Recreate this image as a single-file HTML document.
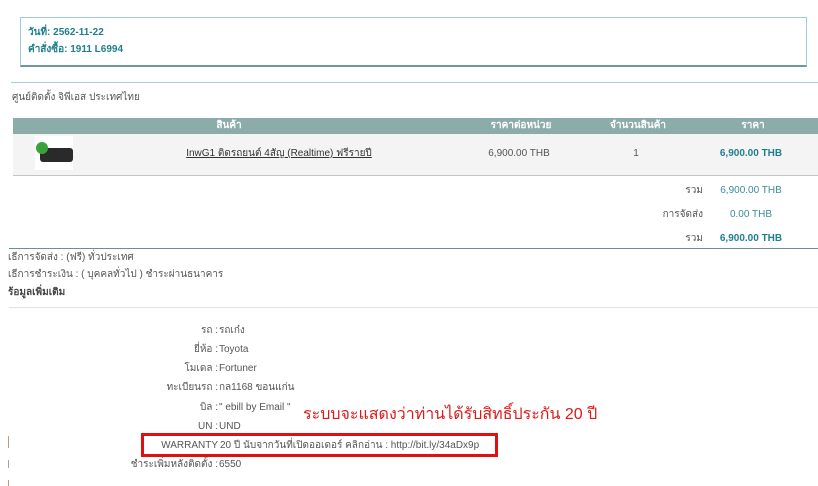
<!DOCTYPE html>
<html><head><meta charset="utf-8"><style>
*{margin:0;padding:0;box-sizing:border-box}
body{width:818px;height:486px;background:#fff;position:relative;overflow:hidden;font-family:"Liberation Sans","DejaVu Sans",sans-serif;font-size:10px;color:#555}
.a{position:absolute;white-space:nowrap;line-height:12px}
.t{color:#1f7f8f;font-weight:bold}
.c{transform:translateX(-50%)}
.r{text-align:right}
</style></head><body>
<div class="a" style="left:20px;top:17px;width:787px;height:50px;border:1px solid #9dcdd4;border-bottom:2px solid #6a9aa0"></div>
<div class="a t" style="left:28px;top:27px">วันที่: 2562-11-22</div>
<div class="a t" style="left:28px;top:44px">คำสั่งซื้อ: 1911 L6994</div>
<div class="a" style="left:11px;top:82px;width:807px;height:1px;background:#a3d3d8"></div>
<div class="a" style="left:12px;top:92px">ศูนย์ติดตั้ง จิพีเอส ประเทศไทย</div>
<div class="a" style="left:13px;top:118px;width:805px;height:16px;background:#8cacaa"></div>
<div class="a c" style="left:229px;top:120px;color:#fff;font-weight:bold">สินค้า</div>
<div class="a c" style="left:521px;top:120px;color:#fff;font-weight:bold">ราคาต่อหน่วย</div>
<div class="a c" style="left:638px;top:120px;color:#fff;font-weight:bold">จำนวนสินค้า</div>
<div class="a c" style="left:753px;top:120px;color:#fff;font-weight:bold">ราคา</div>
<div class="a" style="left:13px;top:134px;width:805px;height:42px;background:#f4f4f4;border-bottom:1px solid #c4c4c4"></div>
<div class="a" style="left:35px;top:136px;width:38px;height:34px;background:#fff"></div>
<div class="a" style="left:40px;top:148px;width:33px;height:14px;background:#2a2a2a;border-radius:3px"></div>
<div class="a" style="left:36px;top:142px;width:12px;height:12px;background:#3aa23a;border-radius:50%"></div>
<div class="a c" style="left:279px;top:148px;color:#333;text-decoration:underline">InwG1 ติดรถยนต์ 4สัญ (Realtime) ฟรีรายปี</div>
<div class="a c" style="left:519px;top:148px">6,900.00 THB</div>
<div class="a c" style="left:636px;top:148px">1</div>
<div class="a c t" style="left:751px;top:148px">6,900.00 THB</div>
<div class="a r" style="left:600px;width:103px;top:185px">รวม</div>
<div class="a c" style="left:751px;top:185px;color:#3a8c98">6,900.00 THB</div>
<div class="a r" style="left:600px;width:103px;top:209px">การจัดส่ง</div>
<div class="a c" style="left:751px;top:209px;color:#3a8c98">0.00 THB</div>
<div class="a r" style="left:600px;width:103px;top:233px">รวม</div>
<div class="a c t" style="left:751px;top:233px">6,900.00 THB</div>
<div class="a" style="left:9px;top:248px;width:809px;height:1px;background:#6e8f92"></div>
<div class="a" style="left:8px;top:252px">เธีการจัดส่ง : (ฟรี) ทั่วประเทศ</div>
<div class="a" style="left:8px;top:269px">เธีการชำระเงิน : ( บุคคลทั่วไป ) ชำระผ่านธนาคาร</div>
<div class="a" style="left:8px;top:287px;font-weight:bold;color:#444">ร้อมูลเพิ่มเติม</div>
<div class="a" style="left:9px;top:307px;width:809px;height:1px;background:#e2e2e2"></div>
<div class="a r" style="left:20px;width:198px;top:325px">รถ :</div><div class="a" style="left:219px;top:325px">รถเก๋ง</div>
<div class="a r" style="left:20px;width:198px;top:344px">ยี่ห้อ :</div><div class="a" style="left:219px;top:344px">Toyota</div>
<div class="a r" style="left:20px;width:198px;top:363px">โมเดล :</div><div class="a" style="left:219px;top:363px">Fortuner</div>
<div class="a r" style="left:20px;width:198px;top:382px">ทะเบียนรถ :</div><div class="a" style="left:219px;top:382px">กล1168 ขอนแก่น</div>
<div class="a r" style="left:20px;width:198px;top:402px">บิล :</div><div class="a" style="left:219px;top:402px">" ebill by Email "</div>
<div class="a r" style="left:20px;width:198px;top:421px">UN :</div><div class="a" style="left:219px;top:421px">UND</div>
<div class="a" style="left:141px;top:433px;width:357px;height:24px;border:3px solid #e01010"></div>
<div class="a r" style="left:20px;width:198px;top:440px">WARRANTY</div><div class="a" style="left:220px;top:440px">20 ปี นับจากวันที่เปิดออเดอร์ คลิกอ่าน : http://bit.ly/34aDx9p</div>
<div class="a r" style="left:20px;width:198px;top:459px">ชำระเพิ่มหลังติดตั้ง :</div><div class="a" style="left:219px;top:459px">6550</div>
<div class="a" style="left:303px;top:405px;font-size:16px;line-height:20px;color:#e01818">ระบบจะแสดงว่าท่านได้รับสิทธิ์ประกัน 20 ปี</div>
<div class="a" style="left:8px;top:436px;width:1px;height:12px;background:#b98"></div>
<div class="a" style="left:8px;top:460px;width:1px;height:8px;background:#b98"></div>
<div class="a" style="left:8px;top:480px;width:1px;height:6px;background:#b98"></div>
</body></html>
